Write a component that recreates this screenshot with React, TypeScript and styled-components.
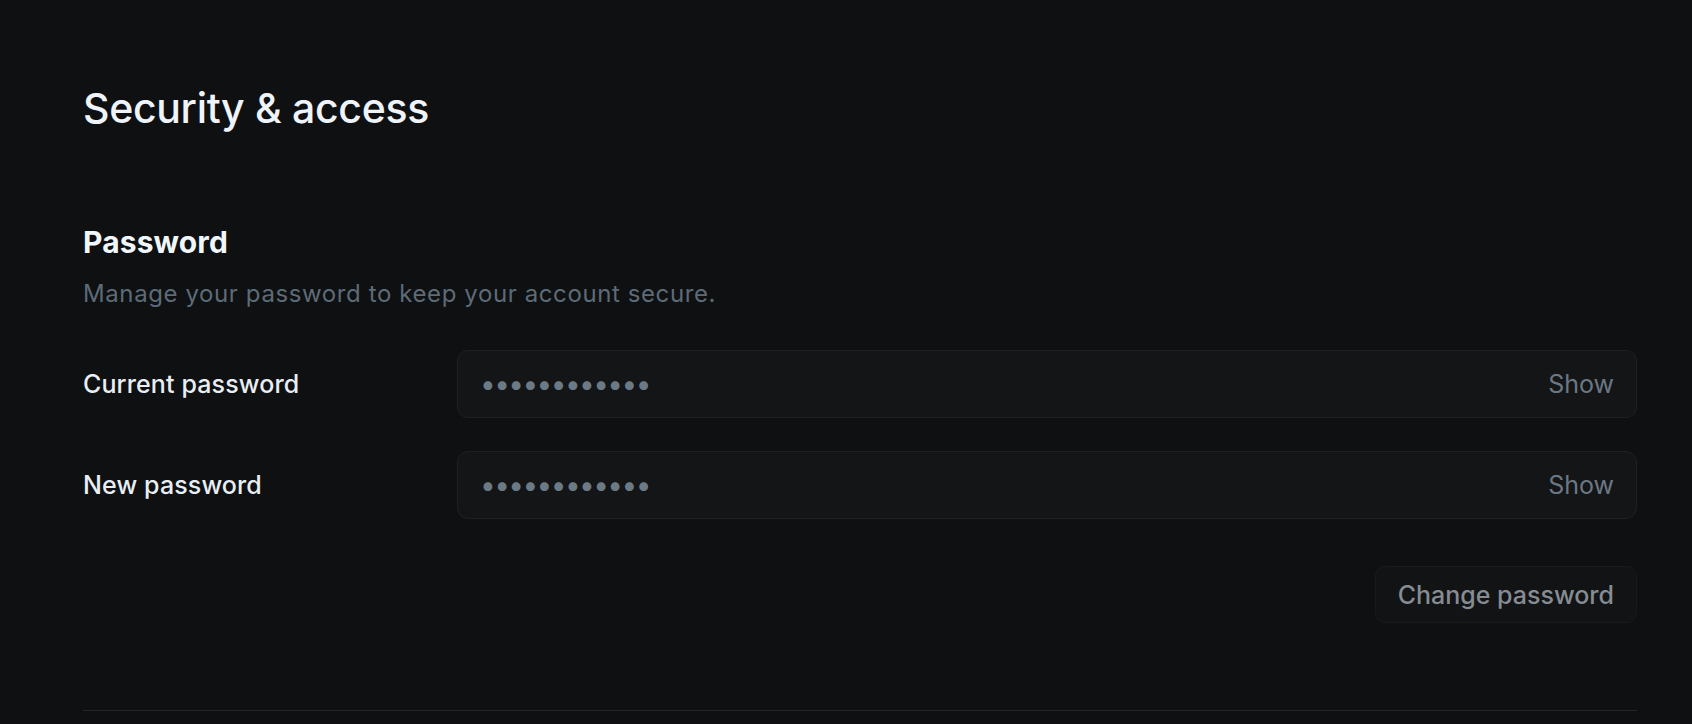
import React, { useState } from "react";
import styled, { createGlobalStyle } from "styled-components";

const GlobalStyle = createGlobalStyle`
  html, body {
    margin: 0;
    padding: 0;
    background: #0e1011;
  }
  body {
    font-family: Inter, "Noto Sans", "Liberation Sans", sans-serif;
    -webkit-font-smoothing: antialiased;
  }
`;

const Page = styled.div`
  min-height: 724px;
  box-sizing: border-box;
  padding: 83px 55px 0 83px;
  background: #0e1011;
  color: #eef4fa;
`;

const Title = styled.h1`
  margin: 0;
  font-size: 41px;
  line-height: 50px;
  font-weight: 450;
  letter-spacing: -0.008em;
  color: #eef4fa;
`;

const Section = styled.section`
  margin-top: 91px;
  padding-bottom: 87px;
  border-bottom: 1px solid #222526;
`;

const SectionTitle = styled.h2`
  margin: 0;
  font-size: 30px;
  line-height: 36px;
  font-weight: 700;
  letter-spacing: 0.004em;
  color: #f1f6fb;
`;

const SectionHint = styled.p`
  margin: 18px 0 0;
  font-size: 24px;
  line-height: 32px;
  letter-spacing: 0.025em;
  color: #5d6b77;
`;

const Fields = styled.div`
  margin-top: 40px;
  display: flex;
  flex-direction: column;
  gap: 33px;
`;

const Row = styled.div`
  display: grid;
  grid-template-columns: 374px 1fr;
  align-items: center;
`;

const Label = styled.label`
  font-size: 25px;
  line-height: 32px;
  font-weight: 450;
  letter-spacing: 0.005em;
  color: #e8eef4;
`;

const Field = styled.div`
  height: 68px;
  box-sizing: border-box;
  display: flex;
  align-items: center;
  justify-content: space-between;
  padding: 0 22px 0 22px;
  background: #131517;
  border: 1px solid #1e2123;
  border-radius: 11px;
`;

const Masked = styled.span`
  font-size: 28px;
  line-height: 32px;
  letter-spacing: -1.6px;
  color: #6b7a85;
`;

const Toggle = styled.button`
  background: none;
  border: none;
  padding: 0;
  font-family: inherit;
  font-size: 25px;
  font-weight: 400;
  color: #6b7883;
  cursor: pointer;
`;

const Actions = styled.div`
  margin-top: 47px;
  display: flex;
  justify-content: flex-end;
`;

const SubmitButton = styled.button`
  height: 57px;
  padding: 0 22px;
  background: #111315;
  border: 1px solid #181b1d;
  border-radius: 10px;
  font-family: inherit;
  font-size: 25px;
  font-weight: 500;
  color: #868c92;
  cursor: not-allowed;
`;

const PasswordRow = ({ label }: { label: string }) => {
  const [shown, setShown] = useState(false);
  return (
    <Row>
      <Label>{label}</Label>
      <Field>
        <Masked>{shown ? "hunter2hunter" : "••••••••••••"}</Masked>
        <Toggle onClick={() => setShown((s) => !s)}>{shown ? "Hide" : "Show"}</Toggle>
      </Field>
    </Row>
  );
};

export default function App() {
  return (
    <>
      <GlobalStyle />
      <Page>
        <Title>Security &amp; access</Title>
        <Section>
          <SectionTitle>Password</SectionTitle>
          <SectionHint>Manage your password to keep your account secure.</SectionHint>
          <Fields>
            <PasswordRow label="Current password" />
            <PasswordRow label="New password" />
          </Fields>
          <Actions>
            <SubmitButton disabled>Change password</SubmitButton>
          </Actions>
        </Section>
      </Page>
    </>
  );
}
